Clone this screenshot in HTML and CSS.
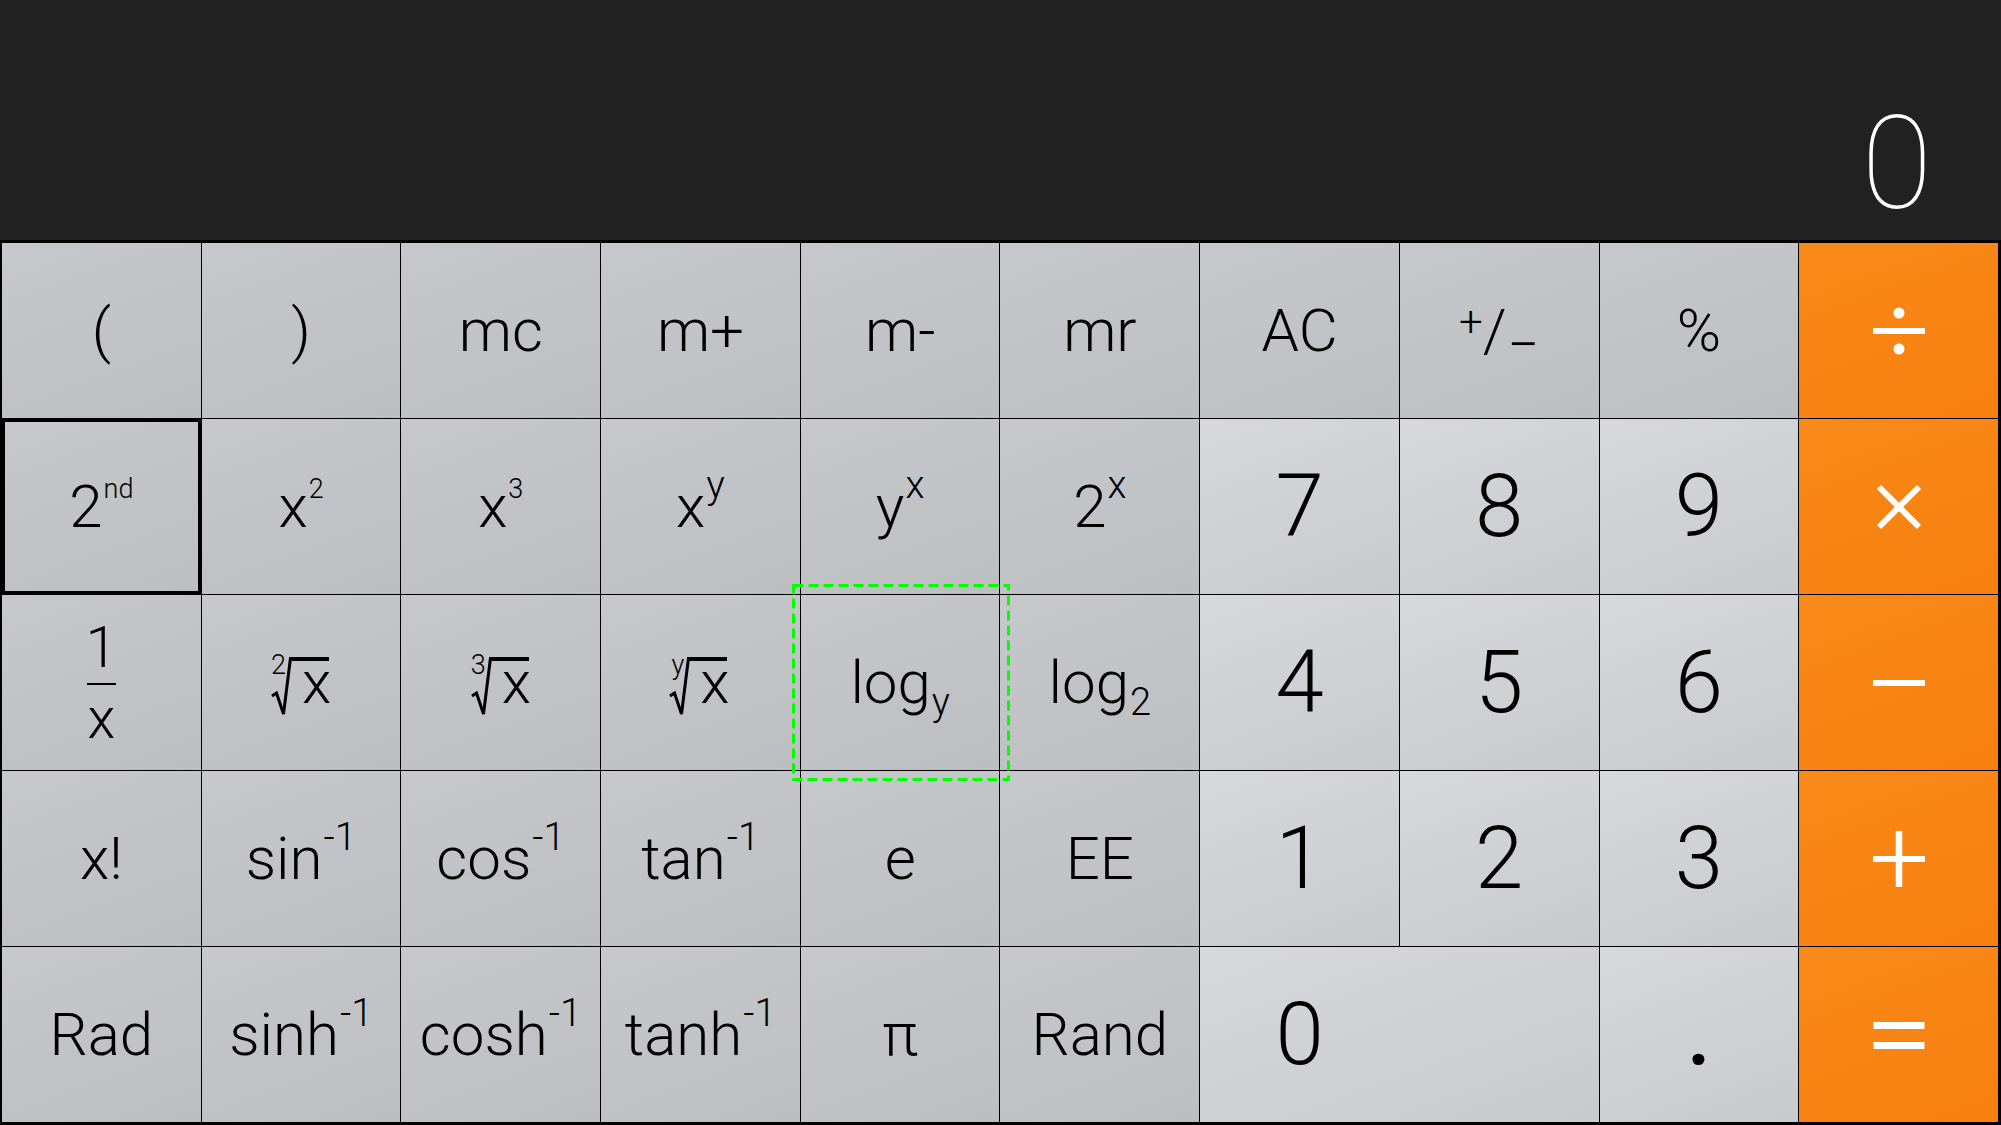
FILE: index.html
```html
<!DOCTYPE html>
<html lang="en">
<head>
<meta charset="utf-8">
<title>Calculator</title>
<link rel="stylesheet" href="styles.css">
</head>
<body>
<div class="calc">
  <div class="display"><span class="display-value">0</span></div>
  <div class="keypad">
    <!-- row 1 -->
    <div class="key fn"><span class="lbl">(</span></div>
    <div class="key fn"><span class="lbl">)</span></div>
    <div class="key fn"><span class="lbl">mc</span></div>
    <div class="key fn"><span class="lbl">m+</span></div>
    <div class="key fn"><span class="lbl">m-</span></div>
    <div class="key fn"><span class="lbl">mr</span></div>
    <div class="key fn"><span class="lbl">AC</span></div>
    <div class="key fn"><span class="lbl"><span class="pm-plus">+</span>/<span class="pm-minus">−</span></span></div>
    <div class="key fn"><span class="lbl">%</span></div>
    <div class="key op" aria-label="÷">
      <svg class="op-icon" viewBox="0 0 60 60" width="60" height="60"><rect x="4" y="27" width="52" height="6"/><circle cx="30" cy="12" r="5.5"/><circle cx="30" cy="48" r="5.5"/></svg>
    </div>

    <!-- row 2 -->
    <div class="key fn selected"><span class="lbl">2<span class="sup-s">nd</span></span></div>
    <div class="key fn"><span class="lbl">x<span class="sup-s">2</span></span></div>
    <div class="key fn"><span class="lbl">x<span class="sup-s">3</span></span></div>
    <div class="key fn"><span class="lbl">x<span class="sup-l">y</span></span></div>
    <div class="key fn"><span class="lbl">y<span class="sup-l">x</span></span></div>
    <div class="key fn"><span class="lbl">2<span class="sup-l">x</span></span></div>
    <div class="key num"><span class="lbl">7</span></div>
    <div class="key num"><span class="lbl">8</span></div>
    <div class="key num"><span class="lbl">9</span></div>
    <div class="key op" aria-label="×">
      <svg class="op-icon" viewBox="0 0 60 60" width="60" height="60"><path d="M10 10 L50 50 M50 10 L10 50" stroke="#fff" stroke-width="6" fill="none"/></svg>
    </div>

    <!-- row 3 -->
    <div class="key fn">
      <span class="frac"><span class="frac-num">1</span><span class="frac-bar"></span><span class="frac-den">x</span></span>
    </div>
    <div class="key fn"><span class="lbl"><span class="idx">2</span><svg class="radical" viewBox="0 0 20 62" width="20" height="62"><path d="M1 42 L5.5 39 L12.5 60 L19.5 4" fill="none" stroke="#000" stroke-width="3" stroke-linejoin="miter"/><rect x="18" y="3" width="40" height="4"/></svg><span class="radx">x</span></span></div>
    <div class="key fn"><span class="lbl"><span class="idx">3</span><svg class="radical" viewBox="0 0 20 62" width="20" height="62"><path d="M1 42 L5.5 39 L12.5 60 L19.5 4" fill="none" stroke="#000" stroke-width="3" stroke-linejoin="miter"/><rect x="18" y="3" width="40" height="4"/></svg><span class="radx">x</span></span></div>
    <div class="key fn"><span class="lbl"><span class="idx">y</span><svg class="radical" viewBox="0 0 20 62" width="20" height="62"><path d="M1 42 L5.5 39 L12.5 60 L19.5 4" fill="none" stroke="#000" stroke-width="3" stroke-linejoin="miter"/><rect x="18" y="3" width="40" height="4"/></svg><span class="radx">x</span></span></div>
    <div class="key fn"><span class="lbl">log<span class="sub">y</span></span></div>
    <div class="key fn"><span class="lbl">log<span class="sub">2</span></span></div>
    <div class="key num"><span class="lbl">4</span></div>
    <div class="key num"><span class="lbl">5</span></div>
    <div class="key num"><span class="lbl">6</span></div>
    <div class="key op" aria-label="−">
      <svg class="op-icon" viewBox="0 0 60 60" width="60" height="60"><rect x="4" y="27" width="52" height="6"/></svg>
    </div>

    <!-- row 4 -->
    <div class="key fn"><span class="lbl">x!</span></div>
    <div class="key fn"><span class="lbl">sin<span class="sup-l">-1</span></span></div>
    <div class="key fn"><span class="lbl">cos<span class="sup-l">-1</span></span></div>
    <div class="key fn"><span class="lbl">tan<span class="sup-l">-1</span></span></div>
    <div class="key fn"><span class="lbl">e</span></div>
    <div class="key fn"><span class="lbl">EE</span></div>
    <div class="key num"><span class="lbl">1</span></div>
    <div class="key num"><span class="lbl">2</span></div>
    <div class="key num"><span class="lbl">3</span></div>
    <div class="key op" aria-label="+">
      <svg class="op-icon" viewBox="0 0 60 60" width="60" height="60"><rect x="4" y="27" width="52" height="6"/><rect x="26.75" y="2" width="6.5" height="56"/></svg>
    </div>

    <!-- row 5 -->
    <div class="key fn"><span class="lbl">Rad</span></div>
    <div class="key fn"><span class="lbl">sinh<span class="sup-l">-1</span></span></div>
    <div class="key fn"><span class="lbl">cosh<span class="sup-l">-1</span></span></div>
    <div class="key fn"><span class="lbl">tanh<span class="sup-l">-1</span></span></div>
    <div class="key fn"><span class="lbl">π</span></div>
    <div class="key fn"><span class="lbl">Rand</span></div>
    <div class="key num zero"><span class="lbl zero-lbl">0</span></div>
    <div class="key num"><span class="lbl dot">.</span></div>
    <div class="key op" aria-label="=">
      <svg class="op-icon" viewBox="0 0 60 60" width="60" height="60"><rect x="4.5" y="17" width="51" height="7"/><rect x="4.5" y="37" width="51" height="7"/></svg>
    </div>
  </div>
</div>
<div class="focus-ring">
  <svg viewBox="0 0 218 197" width="218" height="197"><rect x="1.5" y="1.5" width="215" height="194" fill="none" stroke="#00ff00" stroke-width="3" stroke-dasharray="10 5"/></svg>
</div>
</body>
</html>
```

FILE: styles.css
```css
html, body {
  margin: 0;
  padding: 0;
  width: 2001px;
  height: 1125px;
  overflow: hidden;
  background: #000;
}

.calc {
  width: 2001px;
  height: 1125px;
  display: flex;
  flex-direction: column;
  font-family: Roboto, "Liberation Sans", sans-serif;
}

.display {
  height: 240px;
  flex: 0 0 240px;
  background: #212121;
  display: flex;
  justify-content: flex-end;
  align-items: flex-end;
  padding: 0 69px 12px 0;
  box-sizing: border-box;
}

.display-value {
  color: #fff;
  font-weight: 100;
  font-size: 129px;
  line-height: 129px;
  height: 129px;
}

.keypad {
  flex: 1;
  display: grid;
  grid-template-columns: repeat(10, 1fr);
  grid-template-rows: repeat(5, 175px);
  gap: 1px;
  padding: 3px 3px 3px 2px;
  background: #000;
}

.key {
  display: flex;
  align-items: center;
  justify-content: center;
  color: #000;
  overflow: hidden;
}

.fn {
  background: linear-gradient(160deg, #c7c8cc 0%, #bdbec2 100%);
}

.num {
  background: linear-gradient(160deg, #d7d8db 0%, #c9cace 100%);
}

.op {
  background: linear-gradient(160deg, #f98a17 0%, #f77f0f 100%);
}

.op-icon {
  fill: #fff;
  display: block;
}

.selected {
  box-shadow: inset 0 0 0 3px #000;
}

.lbl {
  display: block;
  white-space: nowrap;
  font-weight: 300;
}

.fn .lbl {
  font-size: 60px;
  line-height: 60px;
  height: 60px;
}

.num .lbl {
  font-size: 87px;
  line-height: 87px;
  height: 87px;
}

.num .dot {
  font-weight: 500;
}

.zero {
  grid-column: span 2;
  justify-content: flex-start;
}

.zero-lbl {
  flex: 0 0 calc((100% - 1px) / 2);
  text-align: center;
}

.sup-s {
  font-size: 27px;
  line-height: 0;
  vertical-align: 29px;
  margin-left: 1px;
}

.sup-l {
  font-size: 39px;
  line-height: 0;
  vertical-align: 29px;
  margin-left: 1px;
}

.sub {
  font-size: 38px;
  line-height: 0;
  vertical-align: -12px;
  margin-left: 1px;
}

.pm-plus {
  font-size: 42px;
  line-height: 0;
  vertical-align: 15px;
}

.pm-minus {
  font-size: 56px;
  line-height: 0;
  vertical-align: -13px;
  margin-left: 1px;
}

.idx {
  font-size: 27px;
  line-height: 0;
  vertical-align: 29px;
}

.radical {
  display: inline-block;
  vertical-align: -13px;
  margin-left: -15px;
  overflow: visible;
  fill: #000;
}

.radx {
  margin-left: 11px;
}

.frac {
  display: flex;
  flex-direction: column;
  align-items: center;
  font-weight: 300;
  font-size: 57px;
}

.frac-num,
.frac-den {
  display: block;
  line-height: 57px;
  height: 57px;
}

.frac-bar {
  display: block;
  width: 29px;
  height: 2px;
  background: #000;
  margin: 7px 0 5px;
}

.focus-ring {
  position: absolute;
  left: 792px;
  top: 584px;
  width: 218px;
  height: 197px;
  pointer-events: none;
}

.focus-ring svg {
  display: block;
}
```
